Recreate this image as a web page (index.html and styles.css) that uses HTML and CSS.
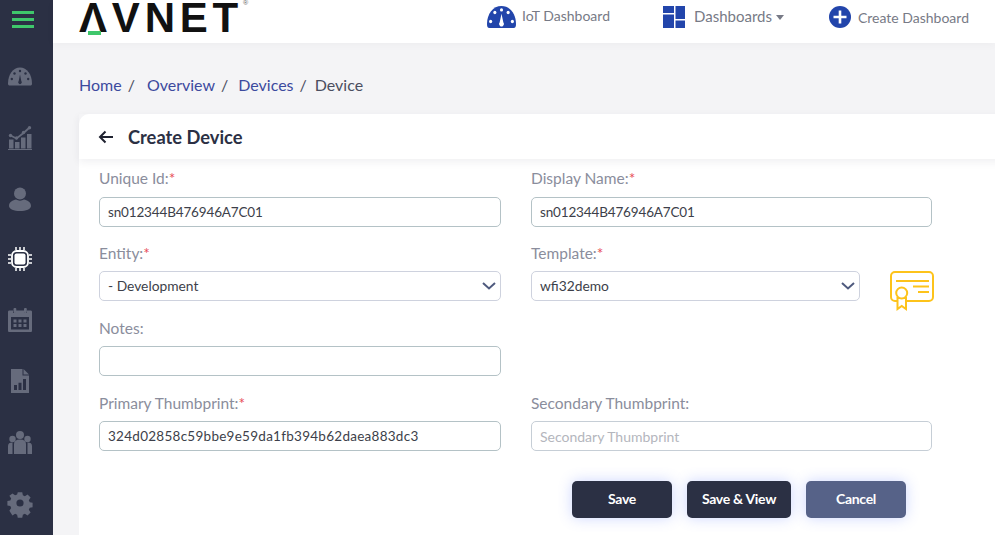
FILE: index.html
```html
<!DOCTYPE html>
<html lang="en">
<head>
  <meta charset="UTF-8" />
  <title>Create Device</title>
  <link rel="stylesheet" href="styles.css">
</head>
<body>
  <div class="app">
    <aside class="sidebar">
      <button class="menu-btn" title="Menu"><span></span><span></span><span></span></button>
      <nav class="side-nav">
        <a href="#" title="Dashboard"><svg viewBox="0 0 24 24"><path d="M0 18.500C0 9.500 5 2.500 12 2.500s12 7 12 16c0 1.500-.5 2-2 2H2c-1.500 0-2-.5-2-2z"/><g fill="#2b3044"><circle cx="12" cy="6" r="1.200"/><circle cx="6.500" cy="8.500" r="1.200"/><circle cx="17.500" cy="8.500" r="1.200"/><circle cx="3.800" cy="14" r="1.200"/><circle cx="20.200" cy="14" r="1.200"/><path d="M12 9.500l1.300 6.500a1.800 1.800 0 1 1-2.600 0z"/></g></svg></a>
        <a href="#" title="Analytics"><svg viewBox="0 0 24 24"><path d="M1 22.500h4.500v-9H1zM7 22.500h4.500v-6.500H7zM13 22.500h4.500v-11H13zM19 22.500h4.500V8H19zM0 23h24v1H0z"/><path d="M2.500 9.500l6 3 7-5.500 5.500-5" fill="none" stroke="#666b7c" stroke-width="1.800"/><circle cx="2.500" cy="9.500" r="1.700"/><circle cx="8.500" cy="12" r="1.700"/><circle cx="15.500" cy="6.500" r="1.700"/><circle cx="21.500" cy="1.800" r="1.700"/></svg></a>
        <a href="#" title="Users"><svg viewBox="0 0 24 24"><circle cx="12" cy="6.500" r="6"/><path d="M1 19c0-4 4-6 7-6.500 2.500 1.500 5.500 1.500 8 0 3 .5 7 2.500 7 6.500 0 3-5 5-11 5S1 22 1 19z"/></svg></a>
        <a href="#" class="active" title="Devices"><svg viewBox="0 0 24 24"><rect x="4" y="4" width="16" height="16" rx="4.500" fill="none" stroke="#fff" stroke-width="1.800"/><rect x="6.500" y="6.500" width="11" height="11" rx="2" fill="#fff"/><path d="M8 0v3M12 0v3M16 0v3M8 21v3M12 21v3M16 21v3M0 8h3M0 12h3M0 16h3M21 8h3M21 12h3M21 16h3" stroke="#fff" stroke-width="1.500" fill="none"/></svg></a>
        <a href="#" title="Calendar"><svg viewBox="0 0 24 24"><path d="M1.500 2.500H5V5h2.500V2.500h9V5H19V2.500h3.500c1 0 1.500.5 1.500 1.500v18.500c0 1-.5 1.500-1.500 1.500h-21C.5 24 0 23.500 0 22.500V4c0-1 .5-1.500 1.500-1.500z"/><rect x="5.500" y="0" width="2.800" height="5" rx="1"/><rect x="16" y="0" width="2.800" height="5" rx="1"/><path fill="#2b3044" d="M3 9h18v12.500H3z"/><path d="M5.500 11.500h3v3h-3zM10.500 11.500h3v3h-3zM15.500 11.500h3v3h-3zM5.500 16h3v3h-3zM10.500 16h3v3h-3zM15.500 16h3v3h-3z"/></svg></a>
        <a href="#" title="Reports"><svg viewBox="0 0 24 24"><path d="M3 0h11.500v6.500H21V24H3z"/><path d="M15.500 0L21 5.500h-5.500z"/><path fill="#2b3044" d="M6 16h3v5H6zM10.500 13.700h3V21h-3zM15 10h3v11h-3z"/></svg></a>
        <a href="#" title="Groups"><svg viewBox="0 0 24 24"><circle cx="4.500" cy="9" r="3.200"/><circle cx="19.500" cy="9" r="3.200"/><circle cx="12" cy="5" r="4"/><path d="M6 24V14c0-3 2-4.500 6-4.500s6 1.500 6 4.500v10z"/><path d="M0 24v-8c0-2.500 1.500-3.500 4.500-3.500V24zM24 24v-8c0-2.500-1.500-3.500-4.500-3.500V24z"/></svg></a>
        <a href="#" title="Settings"><svg viewBox="0 0 24 24"><path fill-rule="evenodd" d="M9.500 0h5l.7 3.500 2.200 1 3-2 3.400 3.400-2 3 1 2.200 3.200.6v5l-3.200.7-1 2.200 2 3-3.400 3.400-3-2-2.200 1-.7 3.400h-5l-.7-3.400-2.200-1-3 2L.2 20.600l2-3-1-2.200L-2 14.700V9.700l3.200-.6 1-2.200-2-3L3.600 1.500l3 2 2.200-1zM12 8a4 4 0 1 0 0 8 4 4 0 0 0 0-8z" transform="translate(1.200 1.200) scale(.9)"/></svg></a>
      </nav>
    </aside>

    <div class="content">
      <header class="topbar">
        <a href="#" class="logo">ΛVNET<sup>®</sup><i class="logo-bar"></i></a>
        <div class="top-links">
          <a href="#" class="top-link link-iot">
            <svg class="ico-gauge" viewBox="0 0.500 24 17" preserveAspectRatio="none"><path fill="#2245ab" d="M0 14.500C0 6.500 5 .5 12 .5s12 6 12 14c0 2-.5 3-2 3H2c-1.500 0-2-1-2-3z"/><g fill="#fff"><circle cx="12" cy="3.500" r="1.300"/><circle cx="6.500" cy="5.500" r="1.300"/><circle cx="17.500" cy="5.500" r="1.300"/><circle cx="3" cy="12.500" r="1.300"/><circle cx="21" cy="12.500" r="1.300"/><path d="M12 6.500l1.500 6.500a2 2 0 1 1-3 0z"/></g></svg>
            <span>IoT Dashboard</span>
          </a>
          <a href="#" class="top-link link-dash">
            <svg class="ico-square" viewBox="0 0 22 22"><path fill="#2245ab" d="M0 0h11v7H0zM0 8.500h11V22H0zM12.500 0H22v13h-9.500zM12.500 14.500H22V22h-9.500z"/></svg>
            <span>Dashboards</span><i class="caret"></i>
          </a>
          <a href="#" class="top-link link-create">
            <svg class="ico-square" viewBox="0 0 22 22"><circle cx="11" cy="11" r="11" fill="#2245ab"/><path d="M11 4.500v13M4.500 11h13" stroke="#fff" stroke-width="2.600"/></svg>
            <span>Create Dashboard</span>
          </a>
        </div>
      </header>

      <main class="main">
        <ul class="breadcrumb">
          <li><a href="#">Home</a>/</li>
          <li><a href="#">Overview</a>/</li>
          <li><a href="#">Devices</a>/</li>
          <li>Device</li>
        </ul>

        <section class="card">
          <div class="card-head">
            <svg class="back-arrow" viewBox="0 0 16 14"><path d="M15 7H2M7.500 1.500L2 7l5.500 5.500" fill="none" stroke="#1f2230" stroke-width="2"/></svg>
            <h1>Create Device</h1>
          </div>
          <form class="form-grid">
            <div class="field">
              <label>Unique Id:<em>*</em></label>
              <input class="input input-id" type="text" value="sn012344B476946A7C01">
            </div>
            <div class="field">
              <label>Display Name:<em>*</em></label>
              <input class="input input-id" type="text" value="sn012344B476946A7C01">
            </div>
            <div class="field">
              <label>Entity:<em>*</em></label>
              <div class="select">- Development<svg viewBox="0 0 14 8"><path d="M1 1l6 5.500L13 1" fill="none" stroke="#4f5a7e" stroke-width="2"/></svg></div>
            </div>
            <div class="field">
              <label>Template:<em>*</em></label>
              <div class="template-row">
                <div class="select">wfi32demo<svg viewBox="0 0 14 8"><path d="M1 1l6 5.500L13 1" fill="none" stroke="#4f5a7e" stroke-width="2"/></svg></div>
                <svg class="cert" viewBox="0 0 44 40"><rect x="1" y="1" width="42" height="29" rx="4" fill="none" stroke="#fdc31b" stroke-width="2"/><path d="M6 10h33M23 15.500h16M28 21h11" stroke="#fdc31b" stroke-width="2" fill="none"/><path d="M7.500 27h8.500v11l-4.250-3-4.250 3z" fill="#fff" stroke="#fdc31b" stroke-width="2"/><circle cx="11.700" cy="22" r="5.500" fill="#fff" stroke="#fdc31b" stroke-width="2"/></svg>
              </div>
            </div>
            <div class="field">
              <label>Notes:</label>
              <input class="input" type="text">
            </div>
            <div class="field"></div>
            <div class="field">
              <label>Primary Thumbprint:<em>*</em></label>
              <input class="input input-thumb" type="text" value="324d02858c59bbe9e59da1fb394b62daea883dc3">
            </div>
            <div class="field">
              <label>Secondary Thumbprint:</label>
              <input class="input input-light" type="text" placeholder="Secondary Thumbprint">
            </div>
          </form>
          <div class="actions">
            <button class="btn">Save</button>
            <button class="btn btn-wide">Save &amp; View</button>
            <button class="btn btn-cancel">Cancel</button>
          </div>
        </section>
      </main>
    </div>
  </div>
</body>
</html>
```

FILE: styles.css
```css
* { box-sizing: border-box; }

html, body {
  margin: 0;
  height: 535px;
  overflow: hidden;
}

body {
  font-family: "Lato", "Open Sans", sans-serif;
  color: #333;
  background-color: #f4f4f6;
}

a {
  color: inherit;
  text-decoration: none;
}

.app {
  display: flex;
  height: 535px;
}

/* sidebar */
.sidebar {
  flex: 0 0 53px;
  background-color: #2b3044;
  padding: 11px 0 0 8px;
}

.menu-btn {
  display: flex;
  flex-direction: column;
  gap: 4px;
  width: 22px;
  margin: 0 0 0 4px;
  padding: 0;
  border: none;
  background: none;
}

.menu-btn span {
  display: block;
  width: 22px;
  height: 3px;
  background-color: #3fc76b;
}

.side-nav {
  display: flex;
  flex-direction: column;
  gap: 36.800px;
  margin-top: 37px;
}

.side-nav a {
  display: block;
  width: 24px;
  height: 24px;
}

.side-nav svg {
  display: block;
  width: 24px;
  height: 24px;
  fill: #666b7c;
  overflow: visible;
}

/* top bar */
.content {
  flex: 1;
  min-width: 0;
  display: flex;
  flex-direction: column;
}

.topbar {
  flex: 0 0 43px;
  display: flex;
  justify-content: space-between;
  background-color: #fff;
  padding-left: 26px;
  position: relative;
  z-index: 1;
  box-shadow: 0 2px 8px rgba(0,0,0,0.03);
}

.logo {
  position: relative;
  font-family: "Liberation Sans", sans-serif;
  font-weight: 700;
  font-size: 42px;
  line-height: 36px;
  letter-spacing: 4.800px;
  color: #111;
  height: 36px;
}

.logo sup {
  font-size: 7px;
  line-height: 0;
  letter-spacing: 0;
  vertical-align: 27px;
  color: #666;
  font-weight: 400;
}

.logo-bar {
  position: absolute;
  left: 9px;
  top: 31px;
  width: 13px;
  height: 4px;
  background-color: #3fc76b;
}

.top-links {
  display: flex;
  align-items: flex-start;
  padding-right: 26px;
  color: #777a86;
  font-size: 14px;
}

.top-link {
  display: flex;
  align-items: center;
  height: 22px;
  margin-top: 6px;
}

.ico-gauge {
  width: 29px;
  height: 22px;
  margin-right: 6px;
}

.ico-square {
  width: 22px;
  height: 22px;
}

.link-iot span { margin-top: -4px; }
.link-dash { margin-left: 53px; font-size: 15px; }
.link-dash span { margin: -2px 0 0 9px; }
.link-create { margin-left: 45px; }
.link-create span { margin: 1px 0 0 7px; }

.caret {
  width: 0;
  height: 0;
  margin-left: 4px;
  border-left: 4px solid transparent;
  border-right: 4px solid transparent;
  border-top: 5px solid #777a86;
}

/* main */
.main {
  flex: 1;
  padding: 0 0 0 26px;
  min-height: 0;
}

.breadcrumb {
  display: flex;
  list-style: none;
  margin: 0;
  padding: 32px 0 0;
  height: 71px;
  font-size: 16px;
  line-height: 20px;
  color: #4a4e60;
}

.breadcrumb li a {
  color: #3c4a9e;
  margin-right: 6px;
}

.breadcrumb li { margin-right: 12px; }
.breadcrumb li:nth-child(2) { margin-right: 10px; }
.breadcrumb li:nth-child(3) { margin-right: 8px; }

.card {
  background-color: #fff;
  border-radius: 10px 0 0 0;
  margin-right: -20px;
  height: 421px;
}

.card-head {
  display: flex;
  align-items: center;
  height: 45px;
  padding-left: 19px;
  box-shadow: 0 3px 8px rgba(40,45,70,0.07);
}

.back-arrow {
  flex: none;
  width: 16px;
  height: 14px;
  margin-right: 14px;
}

.card-head h1 {
  margin: 0;
  font-size: 18.300px;
  font-weight: 700;
  color: #2b3044;
}

/* form */
.form-grid {
  display: grid;
  grid-template-columns: 402px 401px;
  column-gap: 30px;
  grid-auto-rows: 75px;
  padding: 8px 0 0 20px;
}

.field label {
  display: block;
  font-size: 15.500px;
  line-height: 22px;
  height: 29px;
  color: #8a8d9c;
}

.field:nth-child(-n+2) label { height: 30px; }

.field em {
  color: #e8505b;
  font-style: normal;
}

.input,
.select {
  display: flex;
  align-items: center;
  justify-content: space-between;
  width: 100%;
  height: 30px;
  padding: 0 8px;
  border-radius: 5px;
  background-color: #fff;
  font-family: inherit;
  font-size: 13.800px;
  color: #3d3f4a;
  outline: none;
}

.input { border: 1px solid #b4c2c6; }
.input-id { font-size: 13.500px; letter-spacing: -0.150px; padding-bottom: 1px; }
.input-thumb { font-size: 13.500px; letter-spacing: 0.270px; }
.input-light { border-color: #c6ced6; font-size: 14px; }
.input::placeholder { color: #b4b6bd; }
.select { border: 1px solid #ced2de; padding-bottom: 1px; }

.select svg {
  flex: none;
  width: 14px;
  height: 8px;
  margin-right: -4px;
}

.template-row {
  display: flex;
  align-items: flex-start;
}

.template-row .select {
  flex: none;
  width: 329px;
}

.cert {
  flex: none;
  width: 44px;
  height: 40px;
  margin-left: 30px;
}

/* buttons */
.actions {
  display: flex;
  gap: 15px;
  padding: 14px 0 0 493px;
}

.btn {
  width: 100px;
  height: 37px;
  padding: 0 0 2px;
  border: none;
  border-radius: 5px;
  background-color: #2b3044;
  color: #fff;
  font-family: inherit;
  font-size: 14px;
  font-weight: 700;
  letter-spacing: -0.300px;
  box-shadow: 0 0 14px rgba(90,120,255,0.3);
}

.btn-wide { width: 104px; }
.btn-cancel { background-color: #566288; }
```
